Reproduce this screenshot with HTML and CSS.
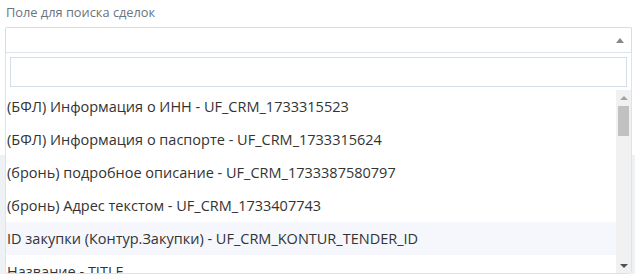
FILE: index.html
```html
<!DOCTYPE html>
<html>
<head>
  <title>Поле для поиска сделок</title>
  <link rel="stylesheet" href="styles.css">
</head>
<body>
  <div class="form-area">
    <div class="field">
      <label class="field-label" for="deal-field">Поле для поиска сделок</label>

      <div class="select">
        <div class="select-box">
          <span class="select-value"></span>
          <span class="select-arrow"></span>
        </div>

        <div class="dropdown">
          <div class="dropdown-search">
            <input type="text" id="deal-field" class="search-input">
          </div>
          <div class="results-wrap">
            <ul class="results">
              <li class="option">(БФЛ) Информация о ИНН - UF_CRM_1733315523</li>
              <li class="option">(БФЛ) Информация о паспорте - UF_CRM_1733315624</li>
              <li class="option">(бронь) подробное описание - UF_CRM_1733387580797</li>
              <li class="option">(бронь) Адрес текстом - UF_CRM_1733407743</li>
              <li class="option highlighted">ID закупки (Контур.Закупки) - UF_CRM_KONTUR_TENDER_ID</li>
              <li class="option">Название - TITLE</li>
              <li class="option">Стадия сделки - STAGE_ID</li>
              <li class="option">Сумма - OPPORTUNITY</li>
              <li class="option">Валюта - CURRENCY_ID</li>
              <li class="option">Тип - TYPE_ID</li>
            </ul>
            <div class="scrollbar">
              <span class="scroll-btn scroll-up"></span>
              <div class="scroll-track">
                <div class="scroll-thumb"></div>
              </div>
              <span class="scroll-btn scroll-down"></span>
            </div>
          </div>
        </div>
      </div>
    </div>
  </div>

  <div class="backdrop"></div>
</body>
</html>
```

FILE: styles.css
```css
body {
  margin: 0;
  padding: 0;
  font-family: "Open Sans", Arial, sans-serif;
  background-color: #eef2f4;
}

.form-area {
  background-color: #FFFFFF;
  height: 155px;
}

.field {
  padding: 3px 3px 0 5px;
}

.field-label {
  display: block;
  font-size: 12.8px;
  line-height: 18px;
  color: #6a737f;
  padding-left: 1px;
  margin-bottom: 6px;
}

.select {
  position: relative;
}

.select-box {
  height: 24px;
  border: 1px solid #d5dde6;
  border-bottom-color: #dde3ec;
  border-radius: 2px 2px 0 0;
  display: flex;
  align-items: center;
  justify-content: space-between;
  padding: 0 7px 0 6px;
}

.select-arrow {
  width: 0;
  height: 0;
  border-left: 4px solid transparent;
  border-right: 4px solid transparent;
  border-bottom: 5px solid #888888;
}

/* dropdown lies over the page below */
.dropdown {
  position: absolute;
  top: 100%;
  left: 0;
  right: 0;
  background-color: #FFFFFF;
  border: 1px solid #dde3ec;
  border-top: none;
  border-radius: 0 0 4px 4px;
}

.dropdown-search {
  padding: 4px 4px 3px 4px;
}

.search-input {
  display: block;
  width: 100%;
  box-sizing: border-box;
  height: 30px;
  border: 1px solid #d5dde6;
  outline: none;
  margin: 0;
}

.results-wrap {
  display: flex;
  height: 183px;
}

.results {
  flex: 1;
  list-style-type: none;
  margin: 0;
  padding: 0;
  overflow: hidden;
}

.option {
  height: 33px;
  line-height: 33px;
  padding-left: 1px;
  font-size: 14.5px;
  color: #333333;
  white-space: nowrap;
}

.highlighted {
  background-color: #f5f7fc;
}

/* scrollbar drawn by hand, like the classic one */
.scrollbar {
  width: 15px;
  display: flex;
  flex-direction: column;
  background-color: #f1f1f1;
}

.scroll-btn {
  height: 15px;
  display: flex;
  align-items: center;
  justify-content: center;
}

.scroll-btn::before {
  content: "";
  width: 0;
  height: 0;
  border-left: 4px solid transparent;
  border-right: 4px solid transparent;
}

.scroll-up::before {
  border-bottom: 4px solid #a3a3a3;
}

.scroll-down::before {
  border-top: 4px solid #505050;
}

.scroll-track {
  flex: 1;
  padding: 1px 2px;
}

.scroll-thumb {
  height: 30px;
  background-color: #c1c1c1;
}

.backdrop {
  height: 119px;
}
```
